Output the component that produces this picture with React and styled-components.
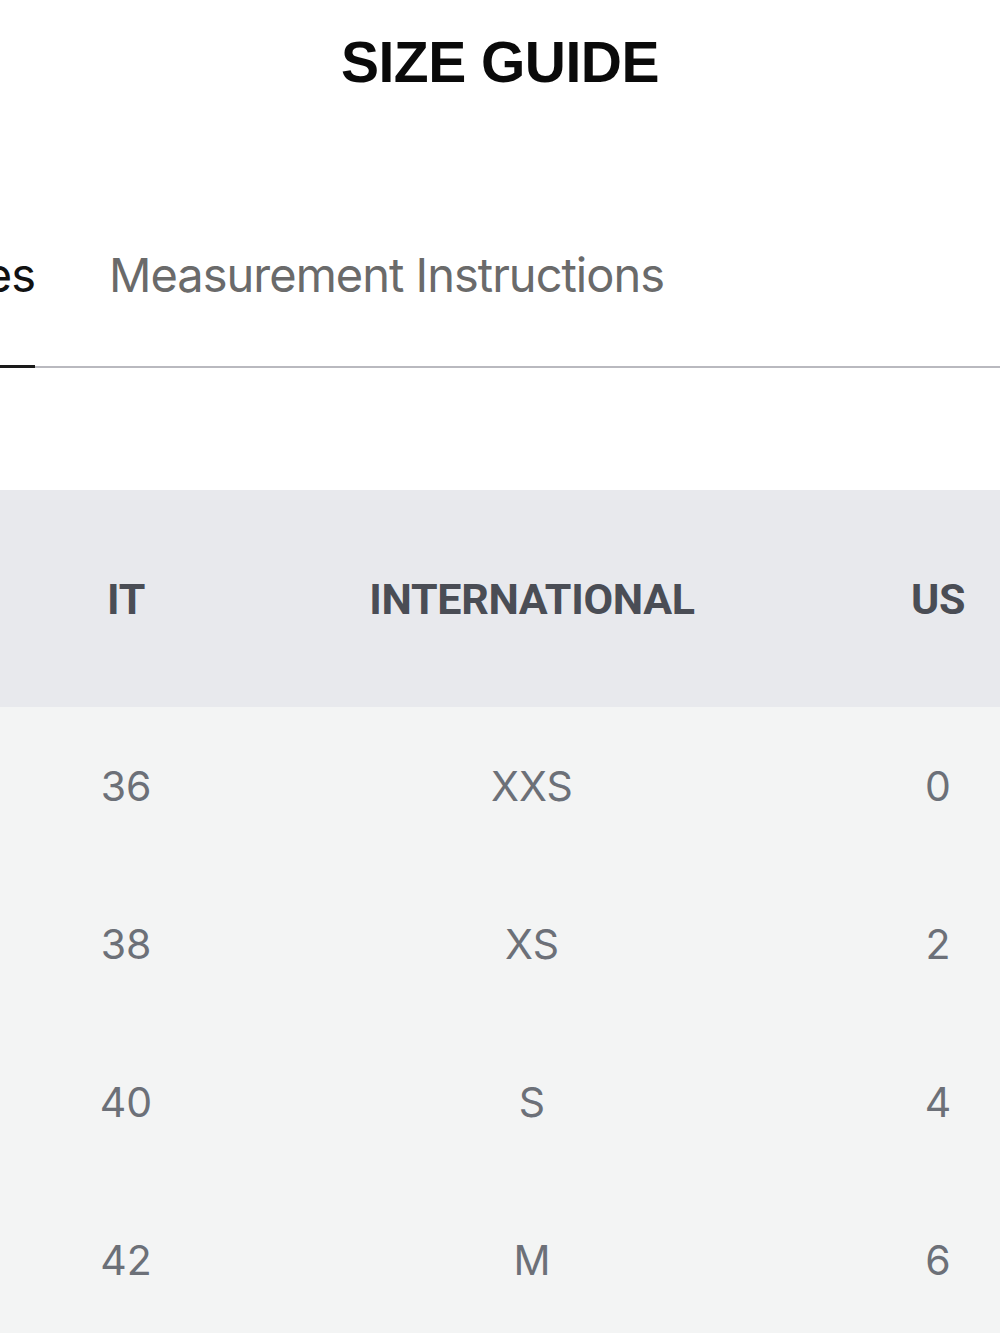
import React from "react";
import styled, { createGlobalStyle } from "styled-components";

const Global = createGlobalStyle`
  html, body { margin: 0; padding: 0; background: #ffffff; }
  body { font-family: Inter, "Noto Sans", sans-serif; -webkit-font-smoothing: antialiased; }
`;

const Page = styled.div`
  width: 1000px;
  height: 1333px;
  overflow: hidden;
  background: #ffffff;
  display: flex;
  flex-direction: column;
`;

const Title = styled.h1`
  margin: 0;
  padding-top: 30px;
  text-align: center;
  font-family: "Liberation Sans", Arial, sans-serif;
  font-weight: 700;
  font-size: 57px;
  line-height: 64px;
  letter-spacing: -0.5px;
  color: #0a0a0a;
`;

const TabBar = styled.div`
  margin-top: 153px;
  border-bottom: 2px solid #b9b9bf;
  display: flex;
  gap: 74px;
  margin-left: -79px;
`;

const Tab = styled.div`
  font-family: Inter, sans-serif;
  font-size: 47px;
  letter-spacing: -1px;
  line-height: 56px;
  padding-bottom: 62px;
  color: ${(p) => (p.$active ? "#111111" : "#6a6a6a")};
  border-bottom: 3px solid ${(p) => (p.$active ? "#1a1a1a" : "transparent")};
  margin-bottom: -2px;
  white-space: nowrap;
`;

const Table = styled.div`
  margin-top: 122px;
  margin-left: -77px;
  width: 1218px;
  display: grid;
  grid-template-columns: repeat(3, 406px);
`;

const HeadCell = styled.div`
  height: 217px;
  background: #e8e9ed;
  display: flex;
  align-items: center;
  justify-content: center;
  font-family: Roboto, sans-serif;
  font-weight: 700;
  font-size: 43px;
  color: #4a4d55;
  letter-spacing: -0.3px;
`;

const Cell = styled.div`
  height: 158px;
  background: #f3f4f4;
  display: flex;
  align-items: center;
  justify-content: center;
  font-family: Inter, sans-serif;
  font-size: 41px;
  color: #6c7078;
`;

const rows = [
  ["36", "XXS", "0"],
  ["38", "XS", "2"],
  ["40", "S", "4"],
  ["42", "M", "6"],
];

export default function App() {
  return (
    <Page>
      <Global />
      <Title>SIZE GUIDE</Title>
      <TabBar>
        <Tab $active>Sizes</Tab>
        <Tab>Measurement Instructions</Tab>
      </TabBar>
      <Table>
        <HeadCell>IT</HeadCell>
        <HeadCell>INTERNATIONAL</HeadCell>
        <HeadCell>US</HeadCell>
        {rows.map((r) => r.map((c, i) => <Cell key={r[0] + i}>{c}</Cell>))}
      </Table>
    </Page>
  );
}
